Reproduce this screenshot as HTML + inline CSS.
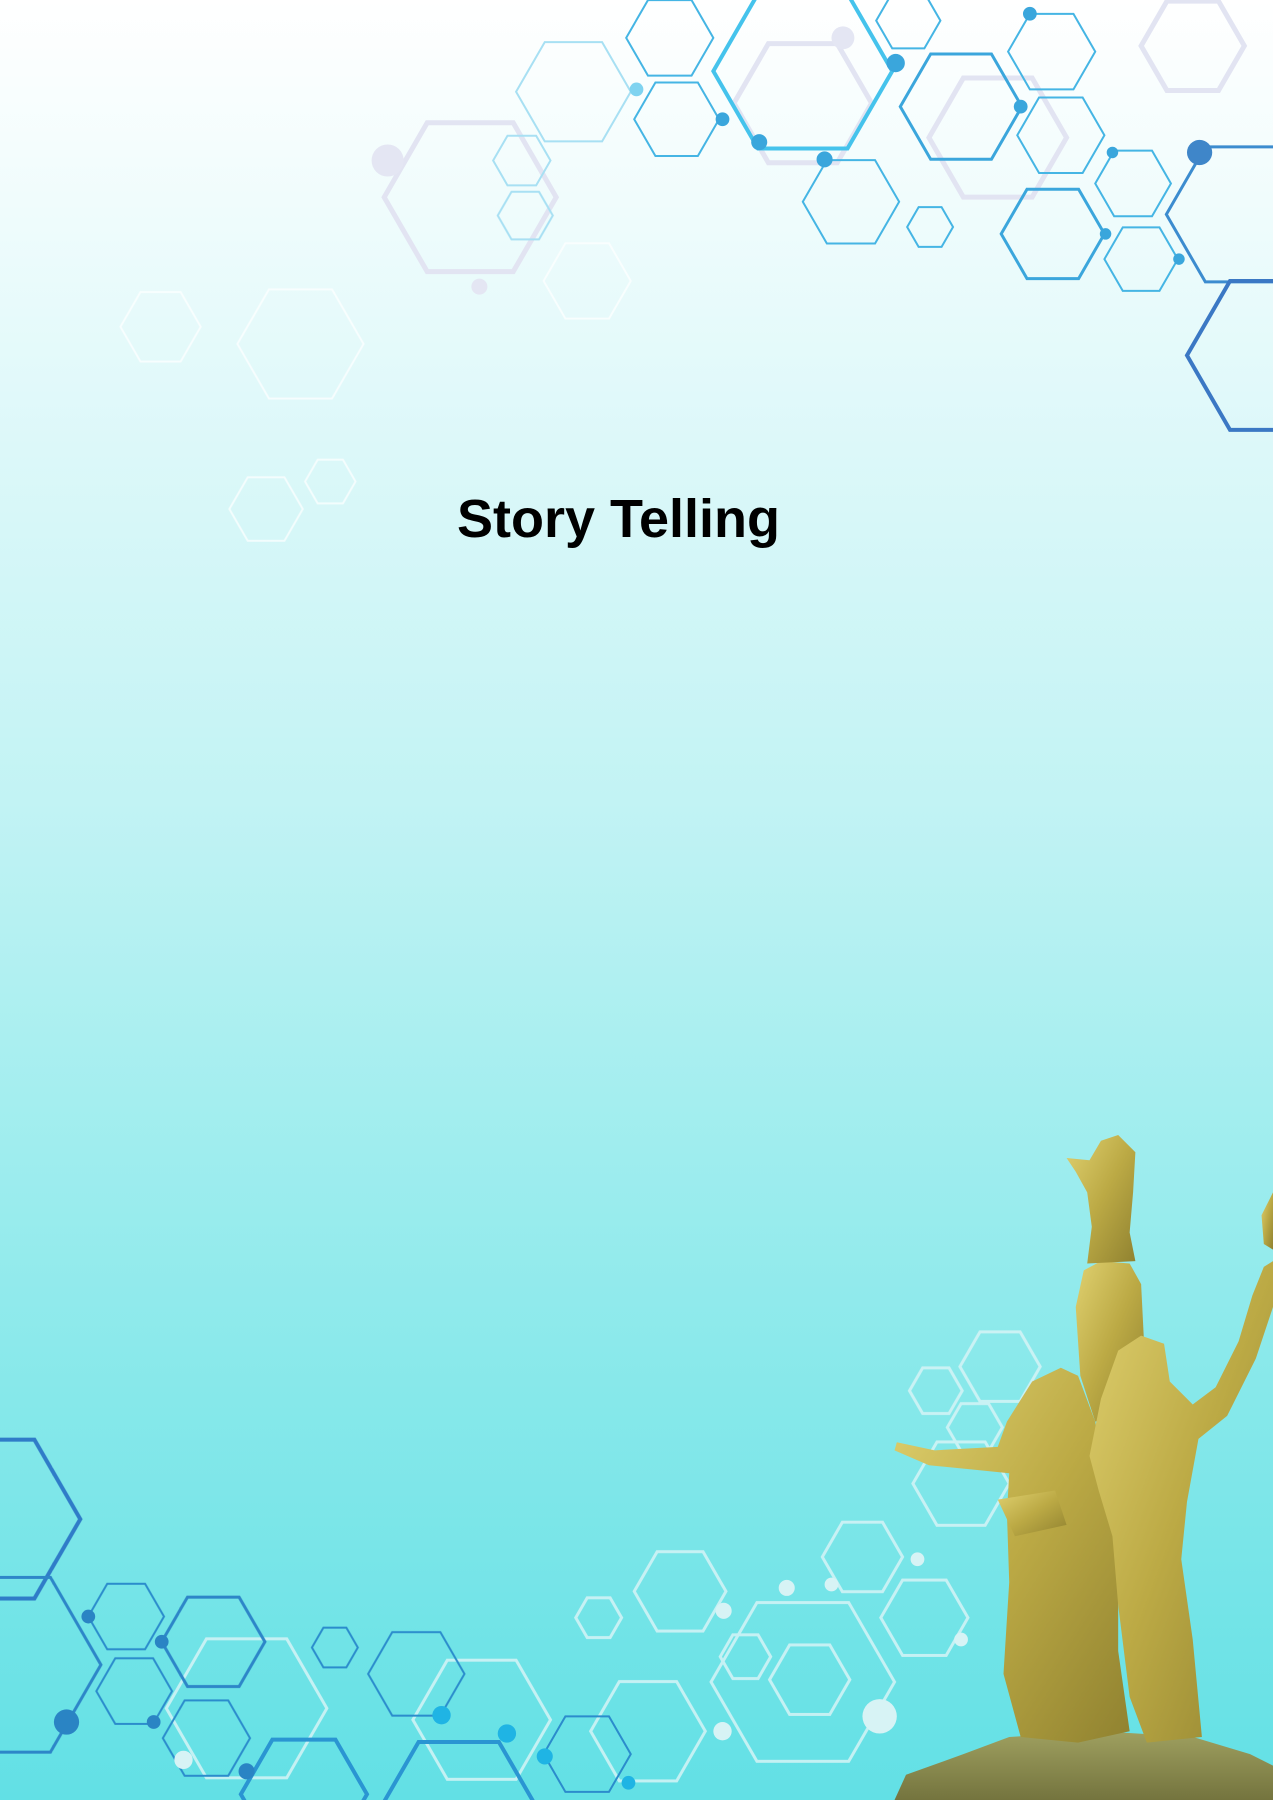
<!DOCTYPE html>
<html><head><meta charset="utf-8"><style>
html,body{margin:0;padding:0}
body{width:1273px;height:1800px;position:relative;overflow:hidden;
background:linear-gradient(180deg,#ffffff 0px,#f4fdfd 150px,#dcf8f9 450px,#c2f3f4 800px,#a4eeef 1100px,#86e8ea 1400px,#62e0e5 1800px);}
svg{position:absolute;left:0;top:0}
h1{position:absolute;left:457px;top:492px;margin:0;white-space:nowrap;font:bold 54px/54px "Liberation Sans",Arial,sans-serif;color:#000}
</style></head><body>
<svg width="1273" height="1800" viewBox="0 0 1110 1570" preserveAspectRatio="none">
<defs>
<path id="h" fill="none" vector-effect="non-scaling-stroke" d="M1 0 L0.5 0.866 L-0.5 0.866 L-1 0 L-0.5 -0.866 L0.5 -0.866Z"/>
<linearGradient id="g" x1="0" y1="0" x2="1" y2="1"><stop offset="0" stop-color="#e0d170"/><stop offset="0.5" stop-color="#bcaa45"/><stop offset="1" stop-color="#908230"/></linearGradient>
<linearGradient id="b" x1="0" y1="0" x2="0" y2="1"><stop offset="0" stop-color="#9fa060"/><stop offset="1" stop-color="#74743e"/></linearGradient>
</defs>
<g fill="none">
<g stroke="#e2e4f2" stroke-width="5">
<use href="#h" transform="translate(410,172) scale(75)"/>
<use href="#h" transform="translate(700,90) scale(60)"/>
<use href="#h" transform="translate(870,120) scale(60)"/>
<use href="#h" transform="translate(1040,40) scale(45)"/>
</g>
<g stroke="#ffffff" stroke-width="2" opacity="0.7">
<use href="#h" transform="translate(140,285) scale(35)"/>
<use href="#h" transform="translate(262,300) scale(55)"/>
<use href="#h" transform="translate(232,444) scale(32)"/>
<use href="#h" transform="translate(288,420) scale(22)"/>
<use href="#h" transform="translate(512,245) scale(38)"/>
</g>
<g stroke="#45c3ec" stroke-width="4"><use href="#h" transform="translate(700,62) scale(78)"/></g>
<g stroke="#3ba6dc" stroke-width="3">
<use href="#h" transform="translate(838,93) scale(53)"/>
<use href="#h" transform="translate(918,204) scale(45)"/>
</g>
<g stroke="#3c8ccf" stroke-width="3">
<use href="#h" transform="translate(1085,187) scale(68)"/>
</g>
<g stroke="#3b78c4" stroke-width="4"><use href="#h" transform="translate(1110,310) scale(75)"/></g>
<g stroke="#45b5e4" stroke-width="2">
<use href="#h" transform="translate(742,176) scale(42)"/>
<use href="#h" transform="translate(917,45) scale(38)"/>
<use href="#h" transform="translate(925,118) scale(38)"/>
<use href="#h" transform="translate(988,160) scale(33)"/>
<use href="#h" transform="translate(995,226) scale(32)"/>
<use href="#h" transform="translate(590,104) scale(37)"/>
<use href="#h" transform="translate(584,33) scale(38)"/>
<use href="#h" transform="translate(811,198) scale(20)"/>
<use href="#h" transform="translate(792,18) scale(28)"/>
</g>
<g stroke="#a8e0f3" stroke-width="2">
<use href="#h" transform="translate(500,80) scale(50)"/>
<use href="#h" transform="translate(455,140) scale(25)"/>
<use href="#h" transform="translate(458,188) scale(24)"/>
</g>
<g stroke="#d6f4f6" stroke-width="3" opacity="0.85">
<use href="#h" transform="translate(215,1490) scale(70)"/>
<use href="#h" transform="translate(420,1500) scale(60)"/>
<use href="#h" transform="translate(565,1510) scale(50)"/>
<use href="#h" transform="translate(700,1467) scale(80)"/>
<use href="#h" transform="translate(706,1465) scale(35)"/>
<use href="#h" transform="translate(593,1388) scale(40)"/>
<use href="#h" transform="translate(752,1358) scale(35)"/>
<use href="#h" transform="translate(806,1411) scale(38)"/>
<use href="#h" transform="translate(838,1294) scale(42)"/>
<use href="#h" transform="translate(872,1192) scale(35)"/>
<use href="#h" transform="translate(816,1213) scale(23)"/>
<use href="#h" transform="translate(850,1245) scale(24)"/>
<use href="#h" transform="translate(522,1411) scale(20)"/>
<use href="#h" transform="translate(650,1445) scale(22)"/>
</g>
<g stroke="#2f7cc8" stroke-width="4">
<use href="#h" transform="translate(-10,1325) scale(80)"/>
</g>
<g stroke="#2d86c8" stroke-width="3">
<use href="#h" transform="translate(0,1452) scale(88)"/>
<use href="#h" transform="translate(186,1432) scale(45)"/>
</g>
<g stroke="#2b8ccc" stroke-width="2">
<use href="#h" transform="translate(110,1410) scale(33)"/>
<use href="#h" transform="translate(117,1475) scale(33)"/>
<use href="#h" transform="translate(180,1516) scale(38)"/>
<use href="#h" transform="translate(292,1437) scale(20)"/>
<use href="#h" transform="translate(363,1460) scale(42)"/>
<use href="#h" transform="translate(512,1530) scale(38)"/>
</g>
<g stroke="#2a95d2" stroke-width="4">
<use href="#h" transform="translate(265,1565) scale(55)"/>
<use href="#h" transform="translate(400,1580) scale(70)"/>
</g>
</g>
<g fill="#3aa6dc">
<circle cx="781" cy="55" r="8"/><circle cx="662" cy="124" r="7"/><circle cx="630" cy="104" r="6"/><circle cx="719" cy="139" r="7"/>
<circle cx="890" cy="93" r="6"/><circle cx="898" cy="12" r="6"/><circle cx="970" cy="133" r="5"/><circle cx="964" cy="204" r="5"/><circle cx="1028" cy="226" r="5"/>
<circle cx="555" cy="78" r="6" fill="#7fd3f0"/>
</g>
<circle cx="1046" cy="133" r="11" fill="#3f86c9"/>
<g fill="#e4e6f3"><circle cx="338" cy="140" r="14"/><circle cx="735" cy="33" r="10"/><circle cx="418" cy="250" r="7"/></g>
<g fill="#2a84c4"><circle cx="58" cy="1502" r="11"/><circle cx="77" cy="1410" r="6"/><circle cx="134" cy="1502" r="6"/><circle cx="141" cy="1432" r="6"/><circle cx="215" cy="1545" r="7"/></g>
<g fill="#1fb4e4"><circle cx="385" cy="1496" r="8"/><circle cx="442" cy="1512" r="8"/><circle cx="475" cy="1532" r="7"/><circle cx="548" cy="1555" r="6"/></g>
<g fill="#d7f3f5"><circle cx="767" cy="1497" r="15"/><circle cx="631" cy="1405" r="7"/><circle cx="686" cy="1385" r="7"/><circle cx="725" cy="1382" r="6"/><circle cx="800" cy="1360" r="6"/><circle cx="838" cy="1430" r="6"/><circle cx="160" cy="1535" r="8"/><circle cx="630" cy="1510" r="8"/></g>
<path fill="url(#b)" d="M780 1570 L790 1548 L840 1530 L880 1515 L960 1510 L1040 1515 L1090 1530 L1110 1540 L1110 1570Z"/>
<g fill="url(#g)">
<path d="M945 1108 L960 1100 L985 1102 L995 1120 L998 1180 L990 1230 L955 1240 L942 1200 L938 1140Z"/>
<path d="M930 1010 L950 1012 L960 995 L975 990 L990 1005 L988 1040 L985 1075 L990 1100 L948 1102 L952 1070 L948 1040 L938 1022Z"/>
<path d="M878 1240 L900 1205 L925 1193 L940 1200 L955 1240 L965 1300 L975 1360 L975 1440 L985 1510 L940 1520 L890 1515 L875 1460 L880 1380 L878 1320 L880 1285 L850 1282 L810 1278 L780 1265 L782 1258 L815 1265 L870 1262Z"/>
<path d="M870 1308 L920 1300 L930 1330 L885 1340Z"/>
<path d="M960 1220 L975 1178 L995 1165 L1015 1172 L1020 1205 L1040 1225 L1060 1210 L1080 1170 L1092 1130 L1102 1105 L1110 1100 L1110 1140 L1095 1185 L1070 1235 L1045 1255 L1035 1310 L1030 1360 L1040 1430 L1048 1515 L1000 1520 L985 1480 L975 1400 L970 1340 L958 1300 L950 1270Z"/>
<path d="M1100 1060 L1110 1040 L1110 1090 L1102 1085Z"/>
</g>
</svg>
<h1>Story Telling</h1>
</body></html>
